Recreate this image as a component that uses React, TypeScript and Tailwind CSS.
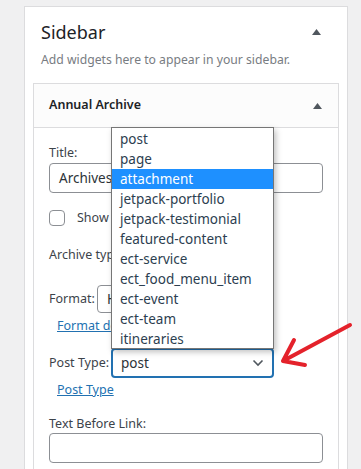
import React from 'react';

const postTypes = [
  'post',
  'page',
  'attachment',
  'jetpack-portfolio',
  'jetpack-testimonial',
  'featured-content',
  'ect-service',
  'ect_food_menu_item',
  'ect-event',
  'ect-team',
  'itineraries',
];

// Small filled "collapse" triangle used in widget headers
const Caret = () => (
  <svg width="9" height="6" viewBox="0 0 9 6">
    <path d="M4.5 0 L9 6 L0 6 Z" fill="#50575e" />
  </svg>
);

const Chevron = () => (
  <svg width="12" height="8" viewBox="0 0 12 8">
    <path d="M1.5 1.5 L6 6 L10.5 1.5" fill="none" stroke="#50575e" strokeWidth="1.6" />
  </svg>
);

const App: React.FC = () => {
  return (
    <div
      className="relative w-[361px] h-[469px] overflow-hidden bg-[#f0f0f1] text-[#3c434a]"
      style={{ fontFamily: '"Noto Sans", "Open Sans", sans-serif' }}
    >
      <div className="ml-[24px] mt-[6px] w-[324px] h-[480px] border border-[#dcdcde] bg-white">
        <div className="flex items-center justify-between h-[36px] mt-[7px] pl-[16px] pr-[26px]">
          <span className="text-[18px] text-[#1d2327]">Sidebar</span>
          <Caret />
        </div>
        <div className="h-[20px] flex items-center pl-[16px] text-[12.2px] text-[#787c82]">
          Add widgets here to appear in your sidebar.
        </div>

        <div className="ml-[8px] mt-[13px] w-[306px] h-[400px] border border-[#dcdcde]">
          <div className="flex items-center justify-between h-[44px] pl-[15px] pr-[16px] bg-[#fcfcfc] border-b border-[#dcdcde]">
            <span className="text-[12.5px] font-semibold text-[#1d2327]">Annual Archive</span>
            <Caret />
          </div>

          <div className="px-[15px] text-[12.5px]">
            <div className="mt-[16px] h-[19px] flex items-center">Title:</div>
            <div className="h-[30px] border border-[#8c8f94] rounded-[4px] flex items-center px-[9px] text-[13.5px] text-[#2c3338]">
              Archives
            </div>

            <div className="mt-[15px] h-[20px] flex items-center gap-[12px]">
              <div className="w-[16px] h-[16px] border border-[#8c8f94] rounded-[4px]" />
              <span>Show post counts</span>
            </div>

            <div className="mt-[17px] h-[20px] flex items-center">Archive type:</div>

            <div className="mt-[19px] h-[30px] flex items-center">
              <span className="w-[48px] shrink-0">Format:</span>
              <div className="h-[28px] w-[160px] border border-[#8c8f94] rounded-[4px] flex items-center px-[9px] text-[13.5px] text-[#2c3338]">
                HTML list
              </div>
            </div>
            <div className="mt-[2px] h-[20px] flex items-center pl-[8px]">
              <span className="text-[#2271b1] underline">Format details</span>
            </div>

            <div className="mt-[12px] h-[30px] flex items-center">
              <span className="w-[62px] shrink-0">Post Type:</span>
              <div className="h-[30px] w-[163px] border-2 border-[#2271b1] rounded-[4px] flex items-center justify-between pl-[8px] pr-[8px] text-[13.5px] text-[#2c3338]">
                <span>post</span>
                <Chevron />
              </div>
            </div>
            <div className="mt-[2px] h-[20px] flex items-center pl-[8px]">
              <span className="text-[#2271b1] underline">Post Type</span>
            </div>

            <div className="mt-[15px] h-[18px] flex items-center">Text Before Link:</div>
            <div className="h-[30px] border border-[#8c8f94] rounded-[4px]" />
          </div>
        </div>
      </div>

      {/* open select list */}
      <div className="absolute left-[111px] top-[127px] w-[163px] h-[222px] border border-[#767676] bg-white shadow-[2px_3px_6px_rgba(0,0,0,0.25)] py-[1px]">
        {postTypes.map((t) => (
          <div
            key={t}
            className={
              t === 'attachment'
                ? 'h-[20px] flex items-center pl-[8px] text-[13.5px] bg-[#1e90ff] text-white'
                : 'h-[20px] flex items-center pl-[8px] text-[13.5px] text-[#2c3e50]'
            }
          >
            {t}
          </div>
        ))}
      </div>

      {/* red annotation arrow */}
      <svg className="absolute left-0 top-0" width="361" height="469" viewBox="0 0 361 469">
        <path
          d="M350 325 L283 361 M294 340 L283 361 L305 365"
          fill="none"
          stroke="#e4222b"
          strokeWidth="4"
          strokeLinecap="round"
          strokeLinejoin="round"
        />
      </svg>
    </div>
  );
};

export default App;
